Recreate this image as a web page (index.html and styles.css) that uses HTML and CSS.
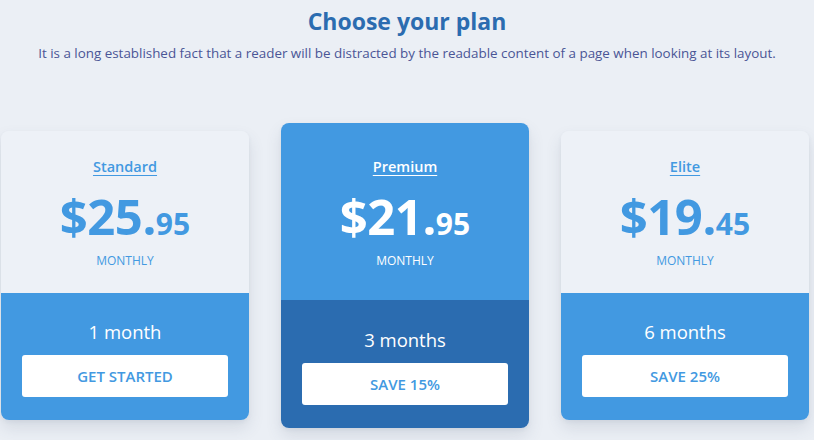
FILE: index.html
```html
<!DOCTYPE html>
<html>
<head>
<meta charset="utf-8">
<link rel="stylesheet" href="styles.css">
</head>
<body>
<header class="intro">
  <h1 class="heading">Choose your plan</h1>
  <p class="lead">It is a long established fact that a reader will be distracted by the readable content of a page when looking at its layout.</p>
</header>
<section class="plans">
  <div class="card">
    <div class="card-top">
      <a class="plan-name" href="#">Standard</a>
      <div class="price">$25.<span class="cents">95</span></div>
      <div class="period">MONTHLY</div>
    </div>
    <div class="card-bottom">
      <div class="term">1 month</div>
      <a class="btn" href="#">GET STARTED</a>
    </div>
  </div>
  <div class="card card-featured">
    <div class="card-top">
      <a class="plan-name" href="#">Premium</a>
      <div class="price">$21.<span class="cents">95</span></div>
      <div class="period">MONTHLY</div>
    </div>
    <div class="card-bottom">
      <div class="term">3 months</div>
      <a class="btn" href="#">SAVE 15%</a>
    </div>
  </div>
  <div class="card">
    <div class="card-top">
      <a class="plan-name" href="#">Elite</a>
      <div class="price">$19.<span class="cents">45</span></div>
      <div class="period">MONTHLY</div>
    </div>
    <div class="card-bottom">
      <div class="term">6 months</div>
      <a class="btn" href="#">SAVE 25%</a>
    </div>
  </div>
</section>
</body>
</html>
```

FILE: styles.css
```css
* { box-sizing: border-box; }
html, body { margin: 0; padding: 0; }
body {
  background: #ebeff5;
  font-family: "Open Sans", "Noto Sans", sans-serif;
  width: 814px;
  height: 440px;
  overflow: hidden;
}
.intro {
  text-align: center;
  padding-top: 5px;
}
.heading {
  margin: 0;
  font-size: 23px;
  line-height: 32px;
  font-weight: 700;
  color: #2b6cb0;
}
.lead {
  margin: 7px 0 0;
  font-size: 13.4px;
  line-height: 18px;
  color: #4a5596;
}
.plans {
  display: flex;
  gap: 32px;
  padding-left: 1px;
  margin-top: 61px;
  align-items: center;
}
.card {
  width: 248px;
  border-radius: 8px;
  overflow: hidden;
  box-shadow: 0 8px 16px rgba(60, 80, 110, 0.13), 0 2px 4px rgba(60, 80, 110, 0.06);
}
.card-top {
  background: #edf1f7;
  height: 162px;
  padding-top: 25px;
  display: flex;
  flex-direction: column;
  align-items: center;
  color: #4299e1;
}
.plan-name {
  font-size: 14.5px;
  line-height: 22px;
  font-weight: 600;
  color: #4299e1;
  text-decoration: underline;
  text-underline-offset: 3px;
}
.price {
  margin-top: 10px;
  font-size: 49px;
  line-height: 56px;
  font-weight: 700;
  letter-spacing: -0.5px;
}
.cents {
  font-size: 30px;
  letter-spacing: 0;
}
.period {
  margin-top: 1px;
  font-size: 12px;
  line-height: 16px;
}
.card-bottom {
  background: #4299e1;
  height: 127px;
  padding: 26px 21px 0;
  display: flex;
  flex-direction: column;
  align-items: center;
}
.term {
  color: #fff;
  font-size: 18.5px;
  line-height: 26px;
}
.btn {
  margin-top: 10px;
  width: 100%;
  height: 42px;
  display: flex;
  align-items: center;
  justify-content: center;
  background: #fff;
  border-radius: 3px;
  color: #4299e1;
  font-size: 15px;
  font-weight: 600;
  text-decoration: none;
}
.card-featured .card-top {
  background: #4299e1;
  height: 177px;
  padding-top: 33px;
  color: #fff;
}
.card-featured .plan-name { color: #fff; }
.card-featured .card-bottom {
  background: #2b6cb0;
  height: 128px;
  padding-top: 27px;
}
```
